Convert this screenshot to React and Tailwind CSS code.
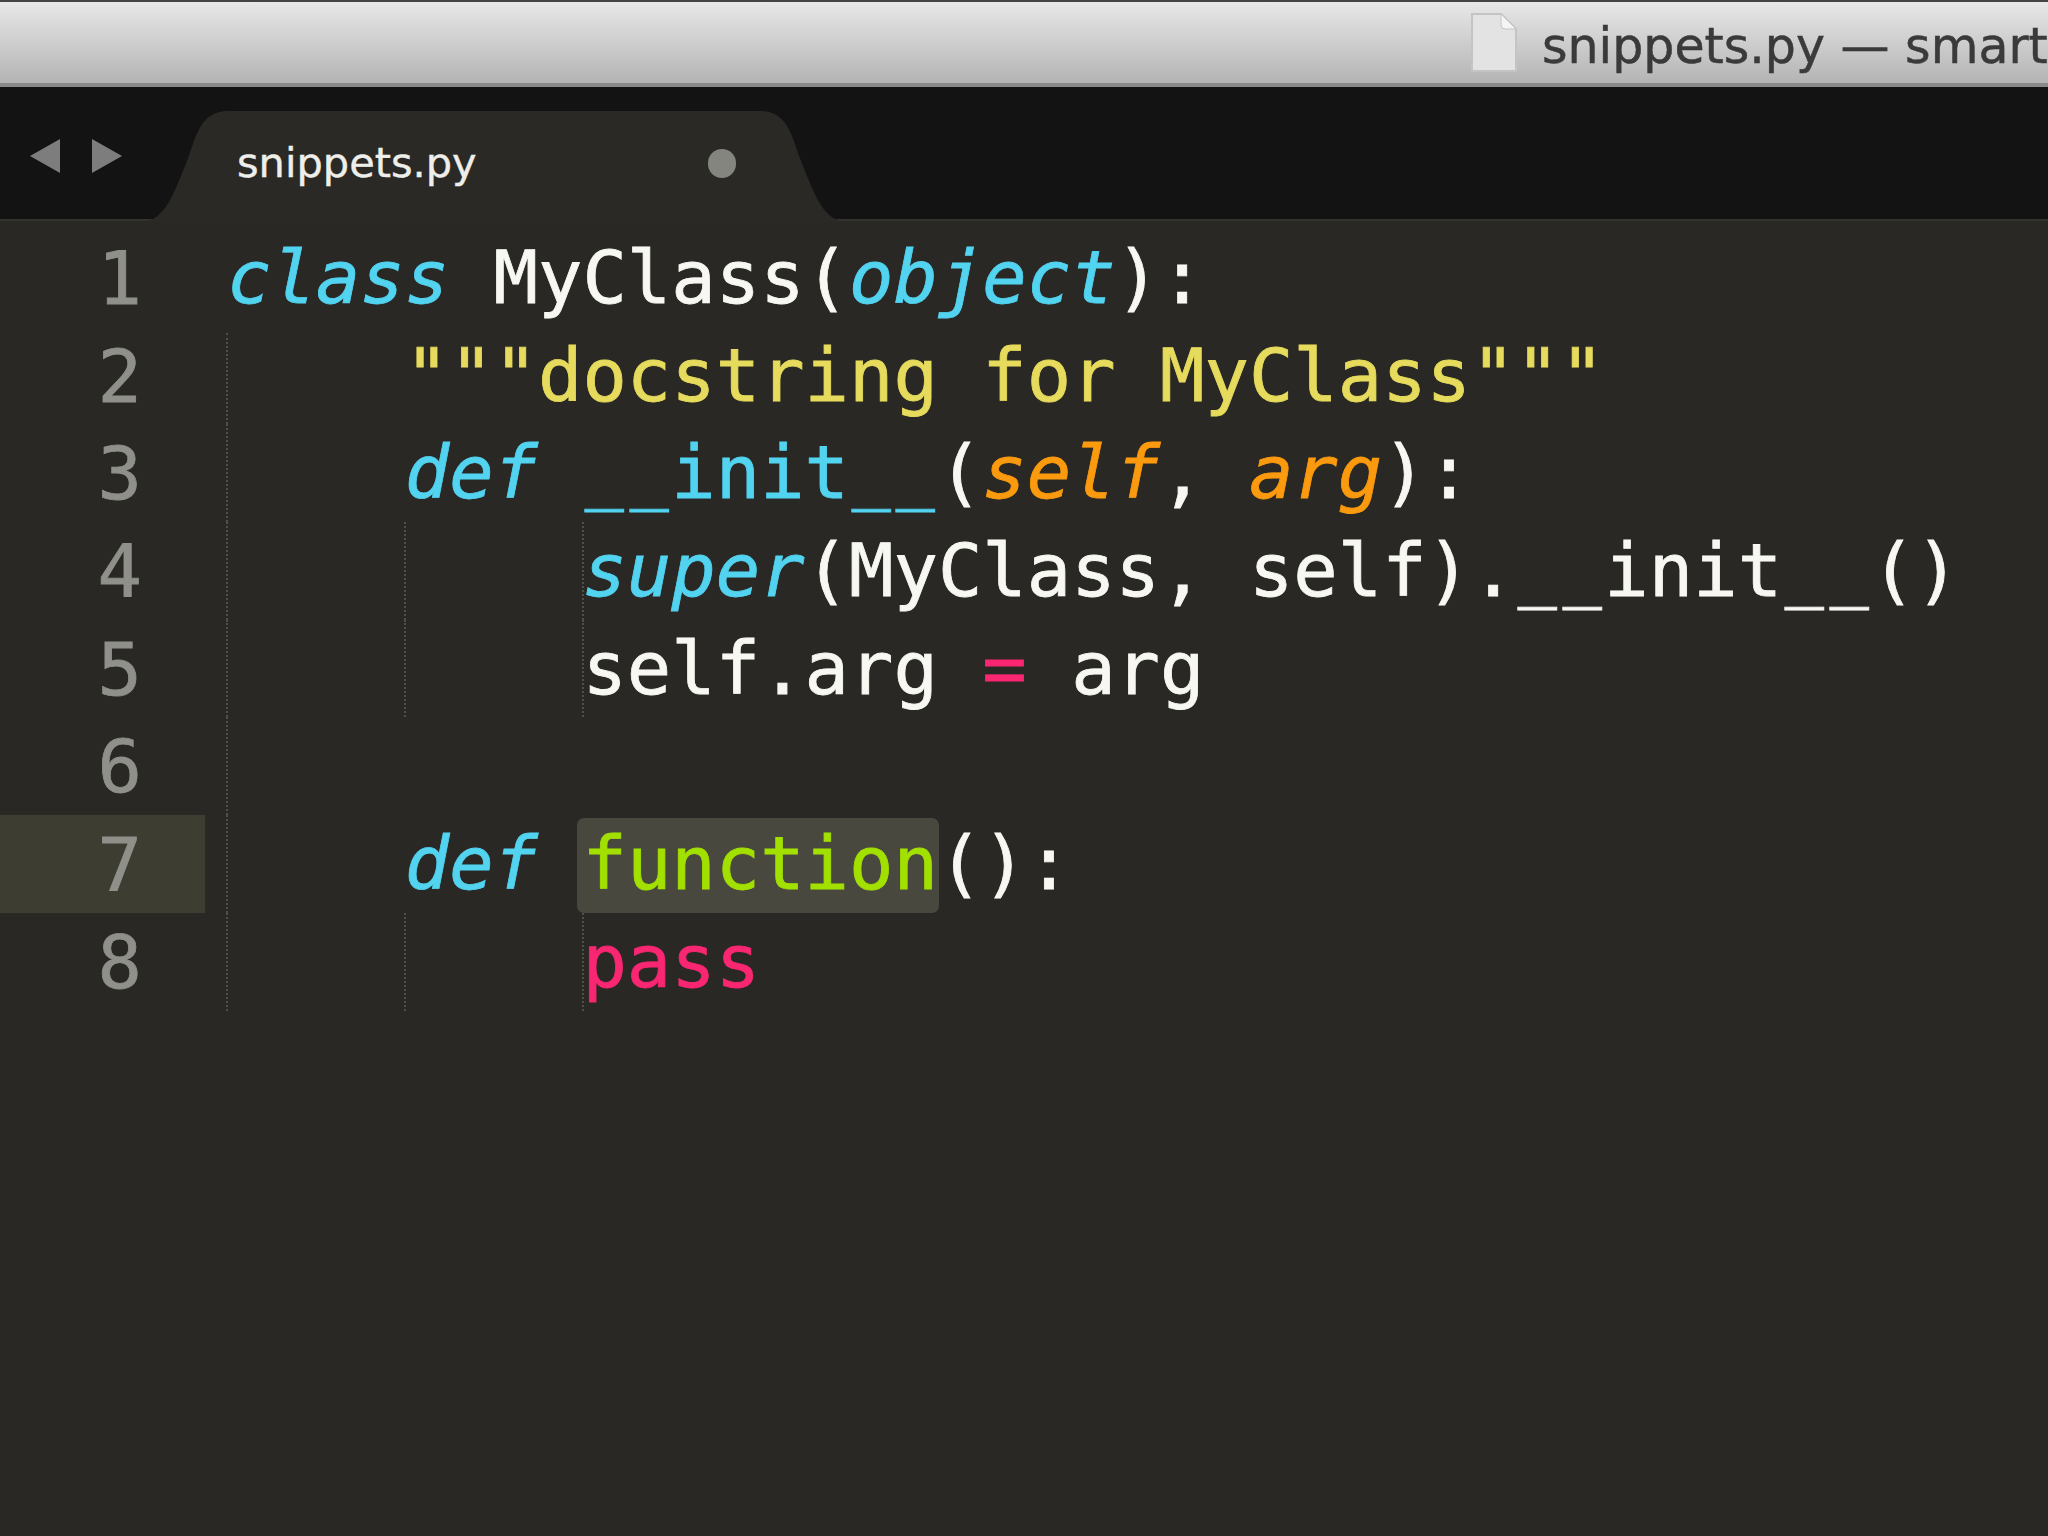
import React from "react";

const mono = "font-['DejaVu_Sans_Mono',monospace]";

// one span per token, colours taken from the editor theme
const C = ({ children }) => <span className="text-[#52d3f0] italic">{children}</span>;
const B = ({ children }) => <span className="text-[#52d3f0]">{children}</span>;
const O = ({ children }) => <span className="text-[#fb9a0e] italic">{children}</span>;
const P = ({ children }) => <span className="text-[#f92672]">{children}</span>;
// underscores have a small gap between them in the reference
const U = () => <span className="inline-block scale-x-[0.88] -translate-y-[3px]">_</span>;

const G1 = "left-[226px]";
const G2 = "left-[404px]";
const G3 = "left-[582px]";

const lines = [
  { guides: [], code: <><C>class</C> MyClass(<C>object</C>):</> },
  { guides: [G1], first: true, code: <>    <span className="text-[#e6db5c]">"""docstring for MyClass"""</span></> },
  { guides: [G1], code: <>    <C>def</C> <B><U /><U />init<U /><U /></B>(<O>self</O>, <O>arg</O>):</> },
  { guides: [G1, G2, G3], code: <>        <C>super</C>(MyClass, self).<U /><U />init<U /><U />()</> },
  { guides: [G1, G2, G3], code: <>        self.arg <P>=</P> arg</> },
  { guides: [G1], code: "" },
  {
    guides: [G1],
    active: true,
    code: (
      <>
        {"    "}
        <C>def</C>{" "}
        <span className="relative text-[#a2e000]">
          <span className="absolute -left-[5px] -right-[1px] -top-[2px] -bottom-[7px] rounded-[7px] bg-[#49483e]"></span>
          <span className="relative">function</span>
        </span>
        ():
      </>
    ),
  },
  { guides: [G1, G2, G3], code: <>        <P>pass</P></> },
];

const CodeLine = ({ number, line }) => (
  <div className="relative flex h-[97.7px] leading-[97.7px]">
    <div
      className={`w-[205px] shrink-0 pt-[1px] pr-[63px] text-right text-[#8f908a] [-webkit-text-stroke:0.8px] ${
        line.active ? "bg-[#3e3d32]" : ""
      }`}
    >
      {number}
    </div>
    <pre className={`pl-[22px] text-[#f8f8f2] [-webkit-text-stroke:0.8px] ${mono}`}>{line.code}</pre>
    {line.guides.map((g) => (
      <span
        key={g}
        className={`absolute bottom-0 border-l-2 border-dotted border-[#4f4f4a] ${g} ${
          line.first ? "top-[6px]" : "top-0"
        }`}
      ></span>
    ))}
  </div>
);

export default function App() {
  return (
    <div className="h-[1536px] w-[2048px] overflow-hidden bg-[#292824] flex flex-col">
      {/* title bar */}
      <div className="h-[87px] shrink-0 flex items-center pl-[1470px] border-t-2 border-t-[#444] border-b-[4px] border-b-[#8a8a8a] bg-gradient-to-b from-[#e8e8e8] to-[#b4b4b4] whitespace-nowrap overflow-hidden">
        <svg width="48" height="62" viewBox="0 0 48 62" className="shrink-0">
          <path d="M2 2 H31 L46 17 V59 H2 Z" fill="#e3e3e3" stroke="#c4c4c4" strokeWidth="2" />
          <path d="M31 2 L46 17 H35 Q31 17 31 13 Z" fill="#f4f4f4" stroke="#c4c4c4" strokeWidth="1" />
        </svg>
        <span className="ml-[24px] pt-[9px] font-['DejaVu_Sans',sans-serif] text-[49px] text-[#3a3a3a] [-webkit-text-stroke:0.5px]">
          snippets.py — smart
        </span>
      </div>

      {/* tab bar */}
      <div className="h-[134px] shrink-0 bg-[#131313] flex border-b-2 border-b-[#33332e]">
        <div className="w-[148px] flex gap-[32px] pl-[30px] pt-[52px] shrink-0">
          <svg width="30" height="34" viewBox="0 0 30 34"><path d="M30 0 V34 L0 17 Z" fill="#7d7d7d" /></svg>
          <svg width="30" height="34" viewBox="0 0 30 34"><path d="M0 0 V34 L30 17 Z" fill="#7d7d7d" /></svg>
        </div>
        <div className="relative w-[692px] h-[111px] shrink-0 mt-[24px]">
          <svg width="692" height="111" viewBox="0 0 692 111" className="absolute left-0 top-0">
            <path
              d="M0 110 C20 104 28 76 39 50 C48 26 52 0 80 0 H612 C640 0 644 26 653 50 C664 76 672 104 692 110 L692 111 H0 Z"
              fill="#2a2925"
            />
          </svg>
          <span className="absolute left-[89px] top-[24px] font-['DejaVu_Sans',sans-serif] text-[41.5px] leading-[56px] text-[#eeeeea] [-webkit-text-stroke:0.4px]">
            snippets.py
          </span>
          <span className="absolute left-[560px] top-[38px] w-[28px] h-[29px] rounded-full bg-[#85857f]"></span>
        </div>
      </div>

      {/* editor */}
      <div className={`pt-[8px] text-[73.8px] ${mono}`}>
        {lines.map((line, i) => (
          <CodeLine key={i} number={i + 1} line={line} />
        ))}
      </div>
    </div>
  );
}
